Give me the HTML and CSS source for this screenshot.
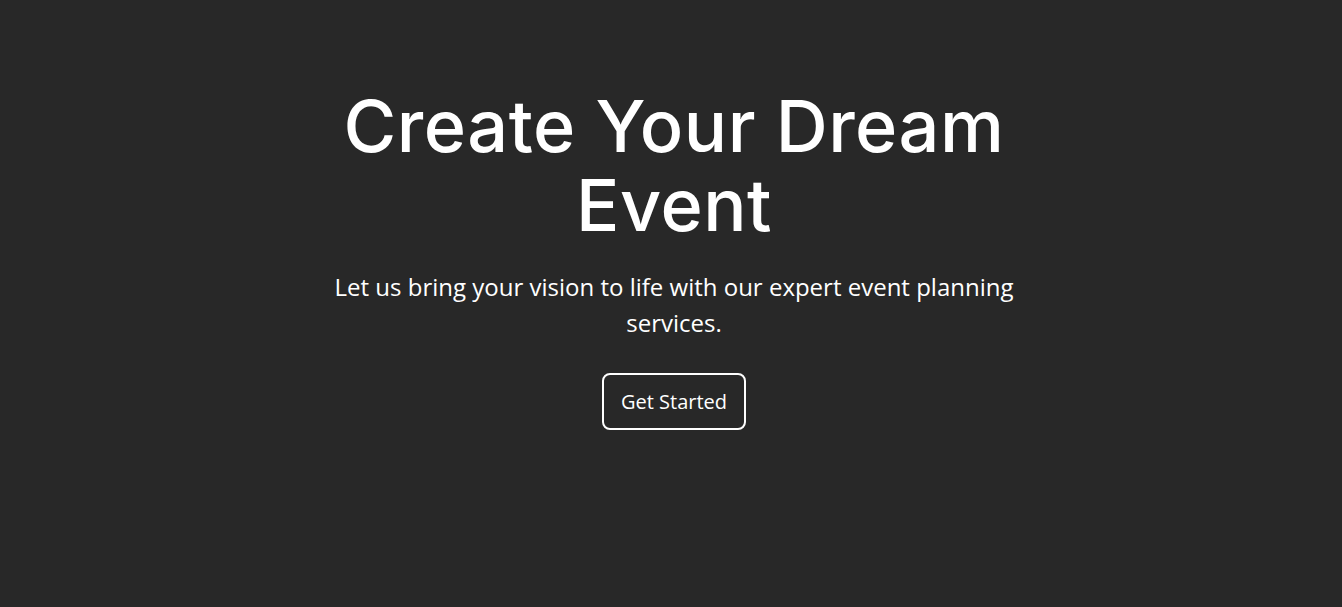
FILE: index.html
```html
<!DOCTYPE html>
<html lang="en">
<head>
<meta charset="utf-8">
<title>Create Your Dream Event</title>
<link rel="stylesheet" href="styles.css">
</head>
<body>
<section class="hero">
  <div class="hero-inner">
    <h1 class="hero-title">Create Your Dream Event</h1>
    <p class="hero-text">Let us bring your vision to life with our expert event planning services.</p>
    <a class="hero-btn" href="#">Get Started</a>
  </div>
</section>
</body>
</html>
```
FILE: styles.css
```css
html, body {
  margin: 0;
  padding: 0;
  background: #282828;
  color: #ffffff;
}
.hero {
  min-height: 607px;
  display: flex;
  justify-content: center;
  padding-top: 86px;
  box-sizing: border-box;
  padding-left: 6px;
}
.hero-inner {
  width: 700px;
  display: flex;
  flex-direction: column;
  align-items: center;
  text-align: center;
}
.hero-title {
  font-family: Inter, "Open Sans", sans-serif;
  font-weight: 500;
  font-size: 72px;
  line-height: 79px;
  margin: 0;
  letter-spacing: 0.5px;
}
.hero-text {
  font-family: "Open Sans", sans-serif;
  font-size: 24px;
  line-height: 36px;
  margin: 25px 0 32px;
}
.hero-btn {
  font-family: "Open Sans", sans-serif;
  font-size: 20px;
  color: #fff;
  text-decoration: none;
  border: 2px solid #fff;
  border-radius: 8px;
  padding: 13px 17px;
}
```
